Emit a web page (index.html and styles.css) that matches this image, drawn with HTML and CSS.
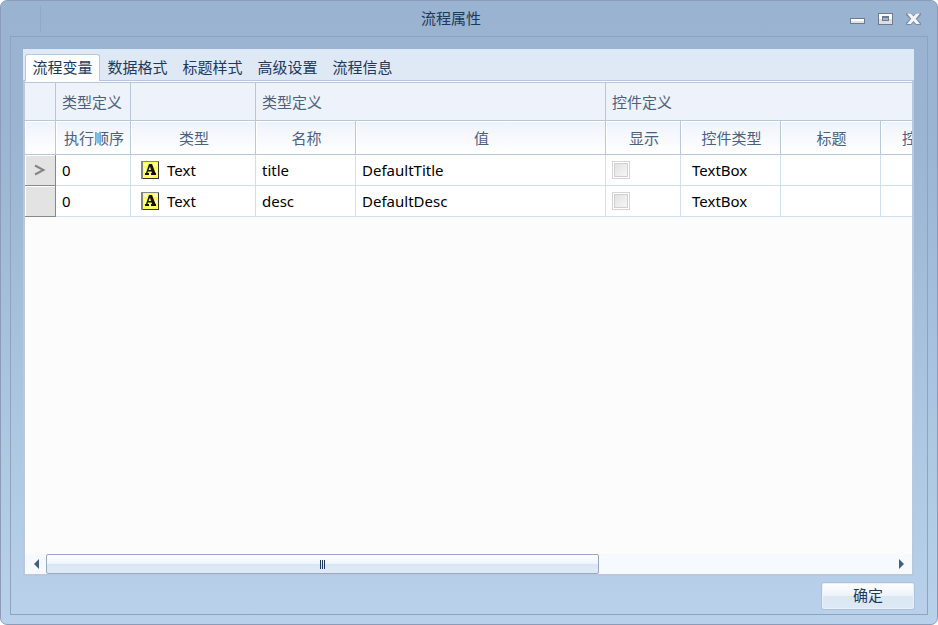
FILE: index.html
```html
<!DOCTYPE html>
<html lang="zh-CN">
<head>
<meta charset="utf-8">
<title>流程属性</title>
<link rel="stylesheet" href="styles.css">
</head>
<body>
<div class="window">
  <header class="titlebar">
    <span class="grip"></span>
    <h1 class="title">流程属性</h1>
    <div class="controls">
      <button class="control" type="button" aria-label="最小化">
        <svg width="16" height="14" viewBox="0 0 16 14" shape-rendering="crispEdges"><path fill="#6d7a8f" d="M0 5h15v6H0z"/><path fill="#fff" d="M1 6h13v2H1z"/><path fill="#e2e2e2" d="M1 8h13v2H1z"/></svg>
      </button>
      <button class="control" type="button" aria-label="最大化">
        <svg width="16" height="14" viewBox="0 0 16 14" shape-rendering="crispEdges"><path fill="#6d7a8f" d="M0 0h15v12H0z"/><path fill="#fafafa" d="M1 1h13v5H1z"/><path fill="#dedede" d="M1 6h13v5H1z"/><path fill="#6d7a8f" d="M4 3h7v5H4z"/><path fill="#9fb6d2" d="M5 5h5v2H5z"/></svg>
      </button>
      <button class="control" type="button" aria-label="关闭">
        <svg width="16" height="14" viewBox="0 0 16 14"><path fill="#7c8ca5" d="M0 0h5l2.500 2.500L10 0h5v2l-4 4 4 4v2h-5L7.500 9.500 5 12H0v-2l4-4-4-4z"/><path fill="#f4f4f4" d="M1 .5h3.800l2.700 3 2.700-3H14L9.700 5.800l4.300 5.200h-3.800l-2.700-3-2.700 3H1l4.300-5.200z"/></svg>
      </button>
    </div>
  </header>
  <main class="frame">
    <section class="panel">
      <div class="tabs" role="tablist">
        <button class="tab active" type="button" role="tab" aria-selected="true">流程变量</button>
        <button class="tab" type="button" role="tab">数据格式</button>
        <button class="tab" type="button" role="tab">标题样式</button>
        <button class="tab" type="button" role="tab">高级设置</button>
        <button class="tab" type="button" role="tab">流程信息</button>
      </div>
      <div class="page">
        <div class="grid">
          <table>
            <colgroup>
              <col class="c-mark"><col class="c-small"><col class="c-type"><col class="c-mid"><col class="c-value"><col class="c-small"><col class="c-mid"><col class="c-mid"><col class="c-mid">
            </colgroup>
            <thead>
              <tr class="bands"><th></th><th>类型定义</th><th></th><th colspan="2">类型定义</th><th colspan="4">控件定义</th></tr>
              <tr class="heads"><th></th><th>执行顺序</th><th>类型</th><th>名称</th><th>值</th><th>显示</th><th>控件类型</th><th>标题</th><th class="cut">控</th></tr>
            </thead>
            <tbody>
              <tr>
                <td class="mark"><svg width="12" height="12" viewBox="0 0 12 12"><path fill="none" stroke="#858585" stroke-width="2" d="M1 1.500 9.500 6 1 10.500"/></svg></td>
                <td>0</td>
                <td><div class="type"><svg class="glyph" width="18" height="18" viewBox="0 0 18 18"><path fill="#858585" d="M0 0h18v18H0z"/><path fill="#333" d="M2 1h16v17H2z"/><path fill="#ffff50" d="M2 1h15v16H2z"/><path fill="#ffffb4" d="M3 2h3v3H3zM12 2h4v3h-4zM3 7h2v4H3zM14 8h2v4h-2zM8 13h2v3H8z"/><path fill="#111" d="M8 3h3l3.500 9H15v2h-5v-2h1l-.5-1.500H7L6.500 12H8v2H4v-2h1zM9 5.500 7.500 9H10z"/></svg>Text</div></td>
                <td>title</td><td>DefaultTitle</td>
                <td><input type="checkbox" disabled aria-label="显示 title"></td>
                <td class="indent">TextBox</td><td></td><td></td>
              </tr>
              <tr>
                <td class="mark"></td>
                <td>0</td>
                <td><div class="type"><svg class="glyph" width="18" height="18" viewBox="0 0 18 18"><path fill="#858585" d="M0 0h18v18H0z"/><path fill="#333" d="M2 1h16v17H2z"/><path fill="#ffff50" d="M2 1h15v16H2z"/><path fill="#ffffb4" d="M3 2h3v3H3zM12 2h4v3h-4zM3 7h2v4H3zM14 8h2v4h-2zM8 13h2v3H8z"/><path fill="#111" d="M8 3h3l3.500 9H15v2h-5v-2h1l-.5-1.500H7L6.500 12H8v2H4v-2h1zM9 5.500 7.500 9H10z"/></svg>Text</div></td>
                <td>desc</td><td>DefaultDesc</td>
                <td><input type="checkbox" disabled aria-label="显示 desc"></td>
                <td class="indent">TextBox</td><td></td><td></td>
              </tr>
            </tbody>
          </table>
        </div>
        <div class="scrollbar">
          <button class="arrow" type="button" aria-label="向左滚动"><svg width="6" height="10" viewBox="0 0 6 10"><path fill="#3f5f85" d="M6 0v10L1 5z"/></svg></button>
          <div class="track"><div class="thumb"><span class="ridges"></span></div></div>
          <button class="arrow" type="button" aria-label="向右滚动"><svg width="6" height="10" viewBox="0 0 6 10"><path fill="#3f5f85" d="M0 0v10l5-5z"/></svg></button>
        </div>
      </div>
    </section>
    <footer class="actions"><button class="ok" type="button">确定</button></footer>
  </main>
</div>
</body>
</html>
```
FILE: styles.css
```css
* { box-sizing: border-box; }

body {
  margin: 0;
  background: #fff;
  font: 15px/20px "Noto Sans", "Noto Sans CJK SC", sans-serif;
  color: #000;
}

button {
  margin: 0;
  padding: 0;
  border: 0;
  background: none;
  font: inherit;
  color: #1e395b;
}

.window {
  display: flex;
  flex-direction: column;
  min-height: 100vh;
  padding: 0 9px 9px;
  border: 1px solid #8c9cb8;
  border-radius: 7px;
  background: linear-gradient(#99b3d0, #9ab4d1 20%, #b4cde7 86%, #b9d1ea);
}

.titlebar {
  display: grid;
  grid-template-columns: 1fr auto 1fr;
  align-items: center;
  height: 35px;
}

.grip {
  width: 1px;
  height: 26px;
  margin-left: 30px;
  background: #92a8c5;
}

.title {
  margin: 0;
  padding: 0 36px 2px 0;
  font-size: 15px;
  font-weight: 400;
  color: #1e395b;
}

.controls {
  display: flex;
  justify-content: flex-end;
  gap: 12px;
  padding: 2px 6px 0 0;
}

.control { width: 16px; height: 14px; }

svg { display: block; }

.frame {
  flex: 1;
  display: flex;
  flex-direction: column;
  padding: 12px 12px 4px;
  border: 1px solid #8fa2bf;
}

.panel {
  flex: 1;
  display: flex;
  flex-direction: column;
  min-width: 0;
  margin-right: 1px;
}

.tabs {
  display: flex;
  align-items: flex-end;
  height: 32px;
  padding-left: 2px;
  background: #dfe8f5;
  box-shadow: inset 0 -1px #b8c8dc;
}

.tab {
  width: 75px;
  height: 27px;
  padding-bottom: 2px;
  border: 1px solid transparent;
  border-bottom: 0;
  border-radius: 3px 3px 0 0;
}

.tab.active {
  border-color: #b8c8dc;
  background: #fff;
}

.page {
  flex: 1;
  display: flex;
  flex-direction: column;
  padding-top: 1px;
  border: 2px solid #b9c8dc;
  border-top: 0;
  background: #fcfcfc;
}

.grid {
  flex: 1;
  overflow: hidden;
  border-top: 1px solid #b8c8dc;
  contain: inline-size;
}

table {
  width: 956px;
  table-layout: fixed;
  border-collapse: separate;
  border-spacing: 0;
}

.c-mark { width: 31px; }
.c-small { width: 75px; }
.c-type { width: 125px; }
.c-mid { width: 100px; }
.c-value { width: 250px; }

th {
  padding: 0 6px;
  border-right: 1px solid #b8c8dc;
  border-bottom: 1px solid #b8c8dc;
  font-weight: 400;
  color: #4b617f;
  white-space: nowrap;
}

.bands th {
  height: 38px;
  background: #eef3fb;
  text-align: left;
}

.heads th {
  height: 34px;
  padding: 0 0 0 2px;
  background: linear-gradient(#eef3fc, #fff);
  box-shadow: inset 1px 1px #fff;
}

.heads .cut {
  padding-left: 21px;
  text-align: left;
}

td {
  height: 31px;
  padding: 0 6px;
  border-right: 1px solid #d0e0f2;
  border-bottom: 1px solid #d0e0f2;
  background: #fff;
}

.mark {
  padding: 0 9px;
  border-color: #888;
  background: #e3e3e3;
  box-shadow: inset 1px 1px #fff;
}

.type {
  display: flex;
  align-items: center;
  gap: 8px;
  padding-left: 4px;
}

.indent { padding-left: 11px; }

input[type="checkbox"] {
  display: block;
  appearance: none;
  width: 18px;
  height: 18px;
  margin: 0;
  padding: 2px;
  border: 1px solid #d4d4d4;
  background: linear-gradient(135deg, #e2e2e2, #f6f6f6) content-box, #fff;
  box-shadow: inset 0 0 0 1px #fff, inset 0 0 0 2px #d0d0d0;
}

.scrollbar {
  display: flex;
  height: 20px;
  background: #f6f9fe;
}

.arrow {
  display: flex;
  align-items: center;
  justify-content: center;
  width: 21px;
}

.track { flex: 1; }

.thumb {
  display: flex;
  align-items: center;
  justify-content: center;
  width: 65.5%;
  height: 20px;
  border: 1px solid #96a9c8;
  border-radius: 2px;
  background: linear-gradient(#fff, #eff5fc 48%, #dbe6f4 52%, #dfeaf7);
}

.ridges {
  width: 5px;
  height: 9px;
  background: repeating-linear-gradient(90deg, #1e395b 0 1px, transparent 1px 2px);
}

.actions {
  display: flex;
  justify-content: flex-end;
  padding-top: 6px;
}

.ok {
  width: 94px;
  height: 28px;
  padding-bottom: 2px;
  border: 1px solid #acc1de;
  border-radius: 3px;
  background: linear-gradient(#fff, #edf3fb 48%, #dce7f4 52%, #dfe9f6);
  box-shadow: inset 0 0 0 1px #e9f1fb;
}
```
